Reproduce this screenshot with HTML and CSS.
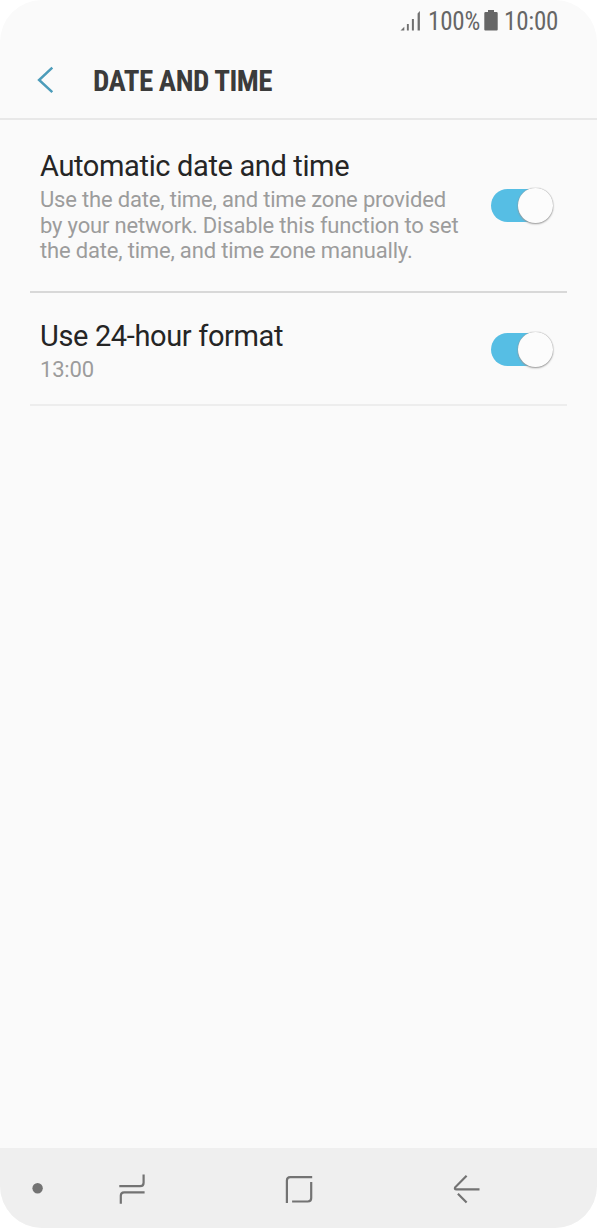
FILE: index.html
```
<!DOCTYPE html>
<html lang="en">
<head>
<meta charset="utf-8">
<title>Date and time</title>
<link rel="stylesheet" href="styles.css">
</head>
<body>
<div class="phone">
  <div class="status">
    <svg class="signal" width="22" height="22" viewBox="0 0 22 22"><path d="M0.5 20.5 4.3 16.8V20.5ZM6.9 14h1.9v6.5H6.9ZM11.9 9h2v11.5h-2ZM17.6 3.5 19.9 1V20.5H17.6Z"/></svg>
    <span class="battery-text">100%</span>
    <svg class="battery" width="14" height="21" viewBox="0 0 14 21"><path d="M4 0h6v2h2.5q1.2 0 1.2 1.2v16.3q0 1-1 1H1.3q-1 0-1-1V3.2Q.3 2 1.5 2H4Z"/></svg>
    <span class="clock">10:00</span>
  </div>
  <header class="header">
    <svg class="back" width="18" height="28" viewBox="0 0 18 28"><path d="M16.3 1.7 3.1 14 16.3 26.1"/></svg>
    <h1 class="title">DATE AND TIME</h1>
  </header>
  <main class="list">
    <section class="row row-auto">
      <div class="text">
        <h2 class="name">Automatic date and time</h2>
        <p class="detail">Use the date, time, and time zone provided<br>by your network. Disable this function to set<br>the date, time, and time zone manually.</p>
      </div>
      <div class="switch"><span class="knob"></span></div>
    </section>
    <section class="row row-format">
      <div class="text">
        <h2 class="name">Use 24-hour format</h2>
        <p class="detail">13:00</p>
      </div>
      <div class="switch"><span class="knob"></span></div>
    </section>
  </main>
  <nav class="nav">
    <svg width="597" height="80" viewBox="0 0 597 80">
      <circle cx="37.6" cy="40.2" r="5.2"/>
      <path d="M119.3 38.1H140.2Q143.6 38.1 143.6 34.7V26.6M144.6 44.4H124.1Q120.8 44.4 120.8 47.8V55.8"/>
      <path d="M312.2 29.1H290.3Q286.9 29.1 286.9 32.5V54.9M311.2 34V50.1Q311.2 53.5 307.8 53.5H292.1"/>
      <path d="M466.6 27.8 455.2 39.3Q454.2 41.4 456.4 41.4H479.5M457.9 45.7 466.6 54.5"/>
    </svg>
  </nav>
</div>
</body>
</html>
```
FILE: styles.css
```
body { margin: 0; background: #fff; font-family: Roboto, "Liberation Sans", sans-serif; }
.phone { width: 597px; height: 1228px; display: flex; flex-direction: column; background: #fafafa; border-radius: 42px; overflow: hidden; }
.status { height: 43px; box-sizing: border-box; padding-left: 400px; display: flex; align-items: flex-start; font-family: "Roboto Condensed", Roboto, sans-serif; font-stretch: 75%; font-size: 25px; letter-spacing: -0.2px; line-height: 28px; color: #666; white-space: nowrap; }
.status span { margin-top: 8px; }
.signal { margin-top: 10px; fill: #707070; }
.battery-text { width: 56px; margin-left: 6px; }
.battery { margin-top: 10px; fill: #666; }
.clock { margin-left: 6px; }
.header { height: 77px; box-sizing: border-box; border-bottom: 2px solid #e8e8e8; display: flex; padding-left: 36px; }
.back { margin-top: 23px; fill: none; stroke: #4c9cba; stroke-width: 2.5; }
.title { margin: 21px 0 0 39px; font-family: "Roboto Condensed", Roboto, sans-serif; font-stretch: 75%; font-size: 29px; line-height: 34px; font-weight: 700; letter-spacing: -0.5px; color: #3b3b3b; white-space: nowrap; }
.list { flex: 1; padding: 0 30px; }
.row { display: flex; justify-content: space-between; box-sizing: border-box; padding: 0 14px 0 10px; }
.row-auto { height: 173px; border-bottom: 2px solid #d8d8d8; padding-top: 29px; }
.row-format { height: 113px; border-bottom: 2px solid #ededed; padding-top: 26px; }
.text { white-space: nowrap; }
.name { margin: 0; font-size: 29px; line-height: 34px; font-weight: 400; letter-spacing: -0.36px; color: #252525; }
.detail { margin: 4px 0 0; font-size: 22px; line-height: 25.5px; letter-spacing: -0.18px; color: #9c9c9c; }
.switch { width: 62px; height: 33px; box-sizing: border-box; padding-left: 27px; border-radius: 17px; background: linear-gradient(#56bee4, #56bee4) left / 50px 100% no-repeat; }
.row-auto .switch { margin-top: 39.5px; }
.row-format .switch { margin-top: 13.5px; }
.knob { display: block; width: 34.5px; height: 34.5px; margin-top: -0.5px; border-radius: 50%; background: #fcfcfc; box-shadow: 0 0 1px #888, 0 1px 2px #999; }
.nav { height: 80px; background: #efefef; }
.nav svg { display: block; fill: none; stroke: #737373; stroke-width: 2.2; }
.nav circle { fill: #737373; stroke: none; }
```
